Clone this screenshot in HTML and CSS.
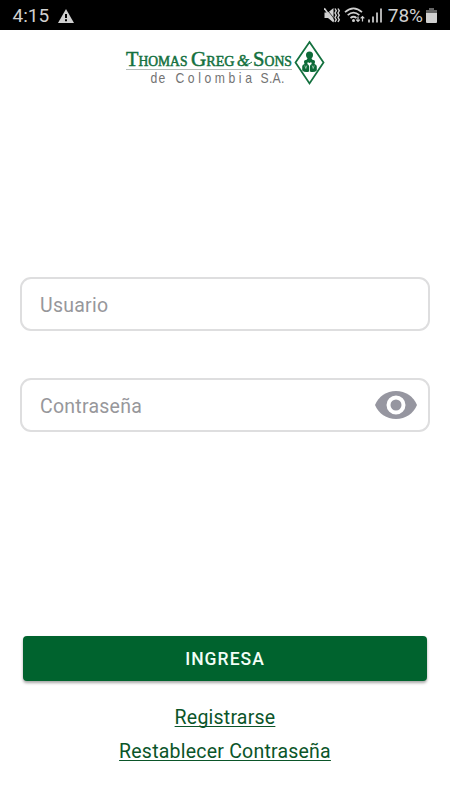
FILE: index.html
```html
<!DOCTYPE html>
<html lang="es">
<head>
<meta charset="utf-8">
<title>Thomas Greg &amp; Sons</title>
<link rel="stylesheet" href="styles.css">
</head>
<body>
<div class="status">
  <span class="clock">4:15</span>
  <svg class="warn" width="16" height="14" viewBox="0 0 16 14"><path fill="#d0d0d0" d="M8 0 16 14H0Z"/><path fill="#000" d="M7 5h2v4H7zM7 10.300h2v2H7z"/></svg>
  <svg class="indicators" width="60" height="20" viewBox="324 6 60 20" fill="none" stroke="#d0d0d0">
    <path fill="#d0d0d0" stroke="none" d="M324.500 12.500h3.500l5.500-4.500v14.500l-5.500-4.500h-3.500z"/>
    <path stroke="#000" stroke-width=".7" d="m325.500 7.500 10 13"/>
    <path stroke-width="1.500" d="m324.300 8.300 9.500 13"/>
    <path stroke-width="1.400" d="m335 8.500 1.300 2.300-1.300 2.200 1.300 2.200-1.300 2.300 1.300 2.200-1.300 2.300M338 8.500l1.300 2.300-1.300 2.200 1.300 2.200-1.300 2.300 1.300 2.200-1.300 2.300"/>
    <path stroke-width="1.700" d="M345 12.200q8.500-7.500 17 0M347.700 15.200q5.800-5 11.600 0M350.500 18q3-2.500 6 0"/>
    <circle cx="353.500" cy="20.500" r="1.500" fill="#d0d0d0" stroke="none"/>
    <path stroke-width="1.200" d="M358 16.500v5m-1.800-1.800 1.800 1.800 1.800-1.800M362.500 21.500v-5m-1.800 1.800 1.800-1.800 1.800 1.800"/>
    <path stroke-width="1.700" d="M369 19.500v3M373 16.500v6M377 12.500v10M381 8.500v14"/>
  </svg>
  <span class="percent">78%</span>
  <svg class="battery" width="11" height="15" viewBox="0 0 11 15"><path fill="#666" d="M3 0h5v2h3v3H0V2h3z"/><path fill="#d0d0d0" d="M0 5h11v9q0 1-1 1H1q-1 0-1-1z"/></svg>
</div>
<main class="screen">
  <svg class="logo" width="202" height="48" viewBox="124 39 202 48">
    <g class="brand">
      <text x="126" y="66" textLength="61.500" lengthAdjust="spacingAndGlyphs"><tspan class="cap">T</tspan>HOMAS</text>
      <text x="191" y="66" textLength="43.500" lengthAdjust="spacingAndGlyphs"><tspan class="cap">G</tspan>REG</text>
      <text class="amp" x="237" y="66" textLength="12" lengthAdjust="spacingAndGlyphs">&amp;</text>
      <text x="253" y="66" textLength="39" lengthAdjust="spacingAndGlyphs"><tspan class="cap">S</tspan>ONS</text>
    </g>
    <path d="M246 64.500q3 0 6-2.500" fill="none" stroke="#14713f"/>
    <path d="M126 69.500h166" stroke="#b4bcb8"/>
    <g class="country">
      <text transform="translate(150.500 82.500) scale(.84 1)" textLength="17.500">de</text>
      <text transform="translate(175.500 82.500) scale(.84 1)" textLength="91">Colombia</text>
      <text transform="translate(260.500 82.500) scale(.84 1)" textLength="28.500">S.A.</text>
    </g>
    <path d="m309.500 42 14 20.500-14 21-14-21z" fill="#fff" stroke="#14713f" stroke-width="1.800"/>
    <g fill="#0d6a38"><circle cx="309.500" cy="55" r="3.500"/><path d="M308 57.500h3l2.300 3.500-3.800 2-3.800-2zM302.200 70.500v-4q0-2 2.300-2.500-1.500-3.700 1.300-4 2.800.3 1.500 4 1.800.5 1.800 2.500v5q-4 1.500-6.900-1zM309.900 71.500v-5q0-2 1.800-2.500-1.300-3.700 1.500-4 2.800.3 1.300 4 2.300.5 2.300 2.500v4q-2.900 2.500-6.900 1z"/></g>
    <path d="m304.800 65.500 1 3 1-3M312.200 65.500l1 3 1-3" fill="none" stroke="#d5eadd" stroke-width=".6"/>
  </svg>
  <form class="fields">
    <label class="field"><span>Usuario</span></label>
    <label class="field"><span>Contraseña</span>
      <svg class="eye" width="42" height="28" viewBox="0 0 42 28"><path fill="#9696a0" d="M0 14C3.500 5.500 11.500 0 21 0s17.500 5.500 21 14c-3.500 8.500-11.500 14-21 14S3.500 22.500 0 14z"/><circle cx="21" cy="14" r="7.500" fill="#9696a0" stroke="#fff" stroke-width="4"/></svg>
    </label>
  </form>
  <button class="submit" type="button">INGRESA</button>
  <nav class="links">
    <a>Registrarse</a>
    <a>Restablecer Contraseña</a>
  </nav>
</main>
</body>
</html>
```

FILE: styles.css
```css
* { box-sizing: border-box; }
body { margin: 0; width: 450px; height: 800px; background: #fff; font-family: Roboto, "Liberation Sans", sans-serif; overflow: hidden; }
.status { height: 30px; background: #000; color: #d0d0d0; display: flex; align-items: center; padding: 1px 13px 0 12.500px; font-size: 19px; }
.warn { margin-left: 9px; }
.indicators { margin-left: auto; }
.percent { margin-left: 4px; }
.battery { margin-left: 3px; }
.screen { height: 770px; padding: 9px 20px 0; display: flex; flex-direction: column; }
.logo { display: block; margin-left: 104px; flex: none; }
.brand { font-family: "Liberation Serif", serif; font-size: 14px; fill: #14713f; stroke: #14713f; stroke-width: .5px; }
.brand .cap { font-size: 21px; }
.brand .amp { font-size: 17px; font-style: italic; }
.country { font-family: "Liberation Sans", sans-serif; font-size: 14.500px; fill: #737373; }
.fields { margin-top: 190px; display: flex; flex-direction: column; gap: 47px; }
.field { height: 54px; border: 2px solid #dededf; border-radius: 11px; padding: 2px 11px 0 18px; display: flex; align-items: center; justify-content: space-between; font-size: 19.500px; letter-spacing: .25px; color: #97979b; }
.eye { margin-bottom: 2px; }
.submit { margin: 204px 3px 0; height: 45px; flex: none; border: 0; border-radius: 4px; background: #00632e; color: #f2fff6; font: 500 17.500px Roboto, sans-serif; letter-spacing: 1.050px; box-shadow: 0 2px 3px rgba(0,0,0,.35); }
.links { margin-top: 20px; display: flex; flex-direction: column; align-items: center; font-size: 19.500px; line-height: 33.500px; letter-spacing: .22px; color: #0b5529; }
.links a { text-decoration: underline; text-decoration-thickness: 1px; text-underline-offset: 2px; text-decoration-skip-ink: none; }
```
